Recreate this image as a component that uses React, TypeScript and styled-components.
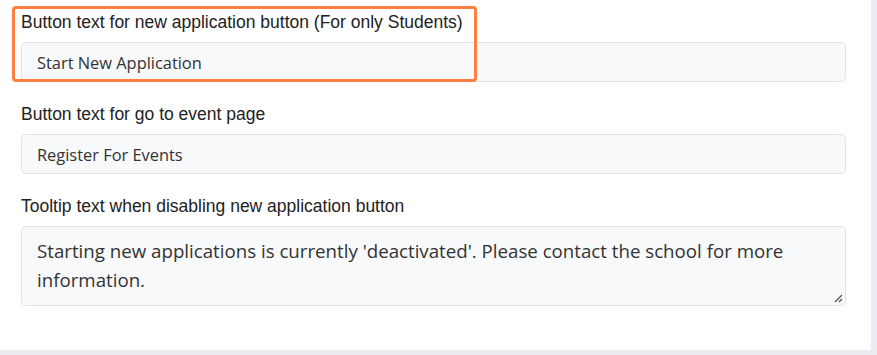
import React from "react";
import styled, { createGlobalStyle } from "styled-components";

const Global = createGlobalStyle`
  html, body { margin: 0; padding: 0; background: #ebecf2; }
  body { width: 877px; height: 355px; overflow: hidden; }
`;

const Panel = styled.div`
  width: 871px;
  height: 350px;
  background: #ffffff;
  box-sizing: border-box;
  padding: 12px 25px 0 21px;
  display: flex;
  flex-direction: column;
  gap: 22px;
  position: relative;
`;

const Field = styled.div`
  display: flex;
  flex-direction: column;
  gap: 10px;
`;

const Label = styled.label`
  font-family: "Liberation Sans", Arial, sans-serif;
  font-size: 17.5px;
  line-height: 20px;
  height: 20px;
  color: #222;
`;

const Input = styled.div`
  box-sizing: border-box;
  height: 40px;
  border: 1px solid #dfe3ea;
  border-radius: 5px;
  background: #f8f9fb;
  padding: 0 15px;
  display: flex;
  align-items: center;
  font-family: "Open Sans", Lato, sans-serif;
  font-size: 16.4px;
  color: #333;
`;

const TextArea = styled.div`
  box-sizing: border-box;
  height: 80px;
  border: 1px solid #dfe3ea;
  border-radius: 5px;
  background: #f8f9fb;
  padding: 9px 15px;
  font-family: "Open Sans", Lato, sans-serif;
  font-size: 18.7px;
  line-height: 29px;
  color: #333;
  position: relative;
`;

const Grip = styled.svg`
  position: absolute;
  right: 2px;
  bottom: 2px;
`;

const Highlight = styled.div`
  position: absolute;
  left: 12px;
  top: 6px;
  width: 465px;
  height: 76px;
  box-sizing: border-box;
  border: 3px solid #ff7f40;
  border-radius: 4px;
  pointer-events: none;
`;

export default function App() {
  return (
    <>
      <Global />
      <Panel>
        <Field>
          <Label>Button text for new application button (For only Students)</Label>
          <Input>Start New Application</Input>
        </Field>
        <Field>
          <Label>Button text for go to event page</Label>
          <Input>Register For Events</Input>
        </Field>
        <Field>
          <Label>Tooltip text when disabling new application button</Label>
          <TextArea>
            Starting new applications is currently 'deactivated'. Please contact the school for more information.
            <Grip width="10" height="10" viewBox="0 0 10 10">
              <path d="M9 2 L2 9 M9 6 L6 9" stroke="#555" strokeWidth="1.3" />
            </Grip>
          </TextArea>
        </Field>
        <Highlight />
      </Panel>
    </>
  );
}
